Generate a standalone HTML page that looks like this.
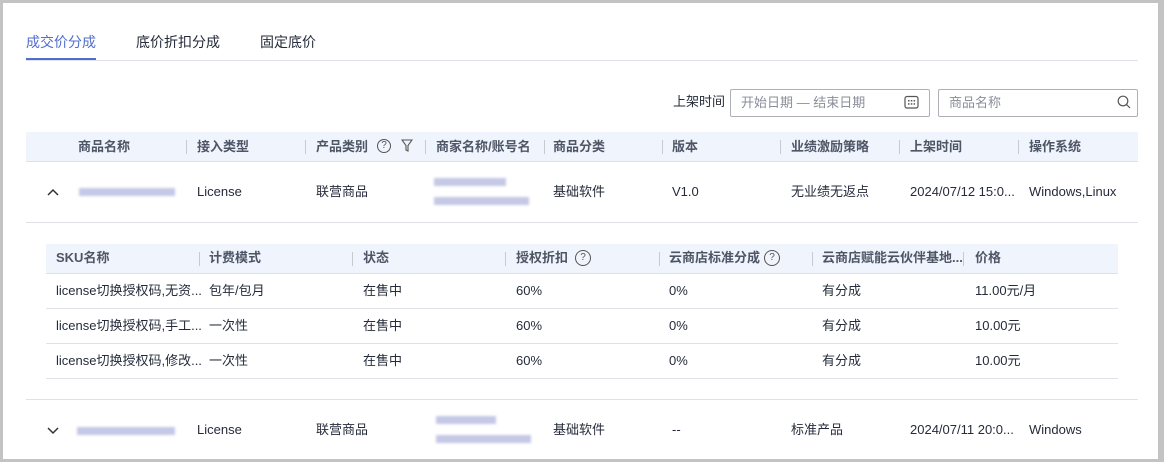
<!DOCTYPE html>
<html><head><meta charset="utf-8"><style>
*{margin:0;padding:0;box-sizing:border-box}
body{width:1164px;height:462px;background:#c3c3c3;font-family:"Liberation Sans","Noto Sans CJK SC",sans-serif;font-size:13px;color:#252b3a;position:relative;overflow:hidden}
.main{position:absolute;left:3px;top:3px;width:1155px;height:456px;background:#fff}
.a{position:absolute;white-space:nowrap;line-height:16px;height:16px}
.s{position:absolute;display:block}
.tab{position:absolute;top:33px;font-size:14px;color:#252b3a;line-height:18px;height:18px}
.hl{position:absolute;height:1px;background:#dfe1e6}
.hd{position:absolute;background:#f0f4fc}
.th{position:absolute;font-weight:bold;color:#4e5566;line-height:16px;height:16px;white-space:nowrap}
.sep{position:absolute;width:1px;height:14px;background:#c6cad2}
.blur{position:absolute;height:8px;background:#c5c8e6;filter:blur(1.2px)}
.q{position:absolute;width:14px;height:14px;border:1px solid #555;border-radius:50%;font-size:10px;line-height:12px;text-align:center;color:#555;font-weight:normal}
.box{position:absolute;border:1px solid #adb0b8;border-radius:2px}
</style></head><body>
<div class="main"></div>
<div class="tab" style="left:26px;color:#526ecc">成交价分成</div>
<div class="tab" style="left:136px">底价折扣分成</div>
<div class="tab" style="left:260px">固定底价</div>
<div class="hl" style="left:26px;top:60px;width:1112px"></div>
<div class="s" style="left:26px;top:58px;width:70px;height:2px;background:#526ecc"></div>

<div class="a" style="left:673px;top:94px">上架时间</div>
<div class="box" style="left:730px;top:89px;width:200px;height:28px"></div>
<div class="a" style="left:741px;top:95px;color:#8a8e99">开始日期 — 结束日期</div>
<svg class="s" style="left:904px;top:95px" width="15" height="14" viewBox="0 0 15 14"><rect x="1" y="1.5" width="13" height="11.5" rx="2" fill="none" stroke="#555" stroke-width="1.2"/><g fill="#555"><rect x="4" y="5" width="1.5" height="1.5"/><rect x="6.8" y="5" width="1.5" height="1.5"/><rect x="9.6" y="5" width="1.5" height="1.5"/><rect x="4" y="8.2" width="1.5" height="1.5"/><rect x="6.8" y="8.2" width="1.5" height="1.5"/><rect x="9.6" y="8.2" width="1.5" height="1.5"/></g></svg>
<div class="box" style="left:938px;top:89px;width:200px;height:28px"></div>
<div class="a" style="left:949px;top:95px;color:#8a8e99">商品名称</div>
<svg class="s" style="left:1117px;top:95px" width="14" height="14" viewBox="0 0 14 14"><circle cx="6" cy="6" r="4.8" fill="none" stroke="#555" stroke-width="1.2"/><path d="M9.5 9.5L13 13" stroke="#555" stroke-width="1.2"/></svg>

<div class="hd" style="left:26px;top:132px;width:1112px;height:29px"></div>
<div class="hl" style="left:26px;top:161px;width:1112px"></div>
<div class="th" style="left:78px;top:139px">商品名称</div>
<div class="sep" style="left:186px;top:140px"></div>
<div class="th" style="left:197px;top:139px">接入类型</div>
<div class="sep" style="left:305px;top:140px"></div>
<div class="th" style="left:316px;top:139px">产品类别</div>
<div class="q" style="left:377px;top:139px">?</div>
<svg class="s" style="left:401px;top:139px" width="12" height="13" viewBox="0 0 12 13"><path d="M1 1h10L7 6.5V12L5 11V6.5Z" fill="none" stroke="#555" stroke-width="1.1"/></svg>
<div class="sep" style="left:425px;top:140px"></div>
<div class="th" style="left:436px;top:139px">商家名称/账号名</div>
<div class="sep" style="left:544px;top:140px"></div>
<div class="th" style="left:553px;top:139px">商品分类</div>
<div class="sep" style="left:662px;top:140px"></div>
<div class="th" style="left:672px;top:139px">版本</div>
<div class="sep" style="left:780px;top:140px"></div>
<div class="th" style="left:791px;top:139px">业绩激励策略</div>
<div class="sep" style="left:899px;top:140px"></div>
<div class="th" style="left:910px;top:139px">上架时间</div>
<div class="sep" style="left:1018px;top:140px"></div>
<div class="th" style="left:1029px;top:139px">操作系统</div>

<svg class="s" style="left:47px;top:188px" width="12" height="8" viewBox="0 0 12 8"><path d="M1 7L6 2L11 7" fill="none" stroke="#333" stroke-width="1.5"/></svg>
<div class="blur" style="left:79px;top:188px;width:96px"></div>
<div class="a" style="left:197px;top:184px">License</div>
<div class="a" style="left:316px;top:184px">联营商品</div>
<div class="blur" style="left:434px;top:178px;width:72px"></div>
<div class="blur" style="left:434px;top:197px;width:95px"></div>
<div class="a" style="left:553px;top:184px">基础软件</div>
<div class="a" style="left:672px;top:184px">V1.0</div>
<div class="a" style="left:791px;top:184px">无业绩无返点</div>
<div class="a" style="left:910px;top:184px">2024/07/12 15:0...</div>
<div class="a" style="left:1029px;top:184px">Windows,Linux</div>
<div class="hl" style="left:26px;top:222px;width:1112px"></div>

<div class="hd" style="left:46px;top:244px;width:1072px;height:29px"></div>
<div class="hl" style="left:46px;top:273px;width:1072px"></div>
<div class="th" style="left:56px;top:250px">SKU名称</div>
<div class="sep" style="left:199px;top:252px"></div>
<div class="th" style="left:209px;top:250px">计费模式</div>
<div class="sep" style="left:352px;top:252px"></div>
<div class="th" style="left:363px;top:250px">状态</div>
<div class="sep" style="left:505px;top:252px"></div>
<div class="th" style="left:516px;top:250px">授权折扣</div>
<div class="q" style="left:575px;top:250px;width:16px;height:16px;line-height:14px">?</div>
<div class="sep" style="left:659px;top:252px"></div>
<div class="th" style="left:669px;top:250px">云商店标准分成</div>
<div class="q" style="left:764px;top:250px;width:16px;height:16px;line-height:14px">?</div>
<div class="sep" style="left:812px;top:252px"></div>
<div class="th" style="left:822px;top:250px">云商店赋能云伙伴基地...</div>
<div class="sep" style="left:963px;top:252px"></div>
<div class="th" style="left:975px;top:250px">价格</div>

<div class="a" style="left:56px;top:283px">license切换授权码,无资...</div>
<div class="a" style="left:209px;top:283px">包年/包月</div>
<div class="a" style="left:363px;top:283px">在售中</div>
<div class="a" style="left:516px;top:283px">60%</div>
<div class="a" style="left:669px;top:283px">0%</div>
<div class="a" style="left:822px;top:283px">有分成</div>
<div class="a" style="left:975px;top:283px">11.00元/月</div>
<div class="hl" style="left:46px;top:308px;width:1072px"></div>
<div class="a" style="left:56px;top:318px">license切换授权码,手工...</div>
<div class="a" style="left:209px;top:318px">一次性</div>
<div class="a" style="left:363px;top:318px">在售中</div>
<div class="a" style="left:516px;top:318px">60%</div>
<div class="a" style="left:669px;top:318px">0%</div>
<div class="a" style="left:822px;top:318px">有分成</div>
<div class="a" style="left:975px;top:318px">10.00元</div>
<div class="hl" style="left:46px;top:343px;width:1072px"></div>
<div class="a" style="left:56px;top:353px">license切换授权码,修改...</div>
<div class="a" style="left:209px;top:353px">一次性</div>
<div class="a" style="left:363px;top:353px">在售中</div>
<div class="a" style="left:516px;top:353px">60%</div>
<div class="a" style="left:669px;top:353px">0%</div>
<div class="a" style="left:822px;top:353px">有分成</div>
<div class="a" style="left:975px;top:353px">10.00元</div>
<div class="hl" style="left:46px;top:378px;width:1072px"></div>
<div class="hl" style="left:26px;top:399px;width:1112px"></div>

<svg class="s" style="left:47px;top:427px" width="12" height="8" viewBox="0 0 12 8"><path d="M1 1L6 6L11 1" fill="none" stroke="#333" stroke-width="1.5"/></svg>
<div class="blur" style="left:77px;top:427px;width:98px"></div>
<div class="a" style="left:197px;top:422px">License</div>
<div class="a" style="left:316px;top:422px">联营商品</div>
<div class="blur" style="left:436px;top:416px;width:60px"></div>
<div class="blur" style="left:436px;top:435px;width:95px"></div>
<div class="a" style="left:553px;top:422px">基础软件</div>
<div class="a" style="left:672px;top:422px">--</div>
<div class="a" style="left:791px;top:422px">标准产品</div>
<div class="a" style="left:910px;top:422px">2024/07/11 20:0...</div>
<div class="a" style="left:1029px;top:422px">Windows</div>
</body></html>
